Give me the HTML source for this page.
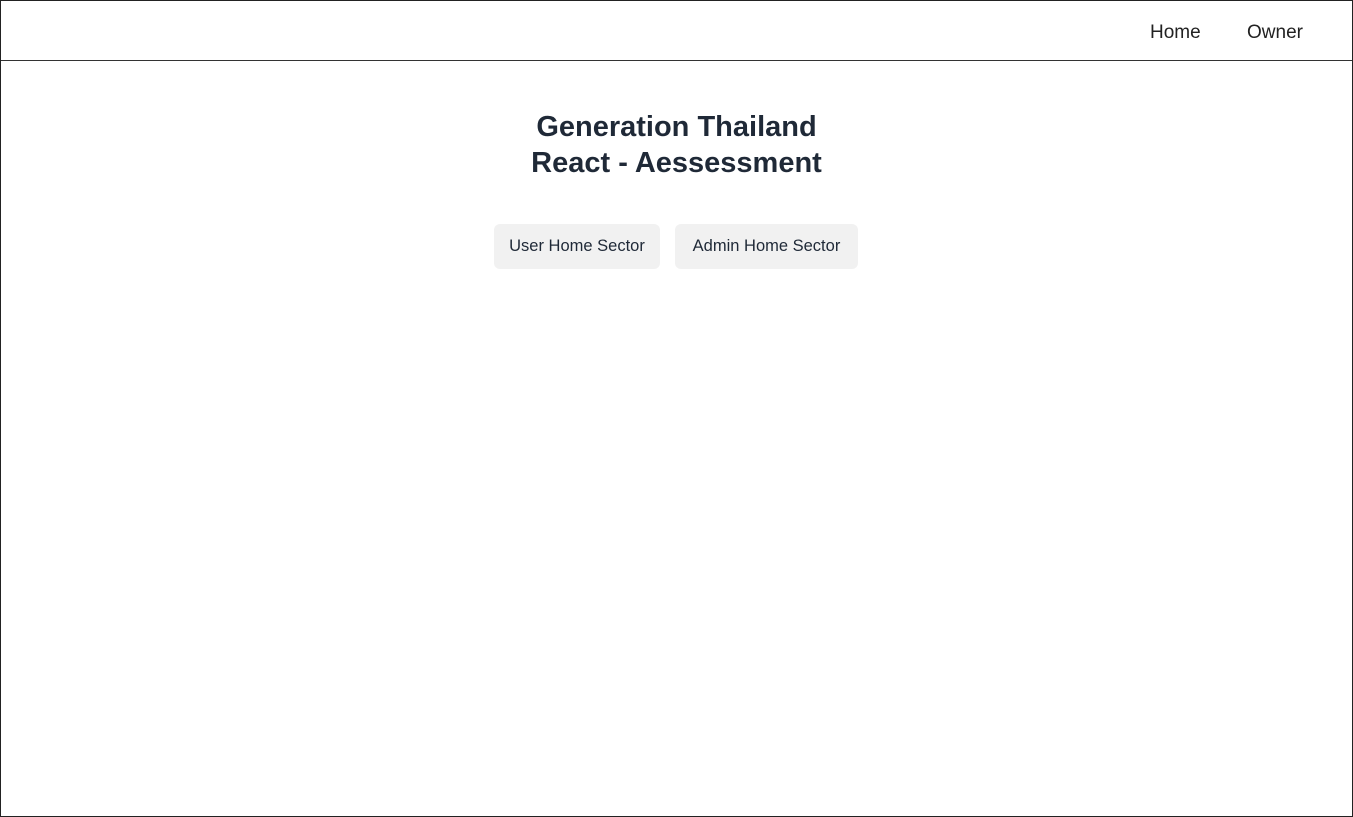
<!DOCTYPE html>
<html><head><style>
html,body{margin:0;padding:0;}
body{width:1353px;height:817px;box-sizing:border-box;border:1px solid #222;font-family:"Liberation Sans",sans-serif;color:#1f2937;background:#fff;position:relative;overflow:hidden;}
.hdr{height:59px;border-bottom:1px solid #333;position:relative;}
.nav{position:absolute;top:21px;font-size:19px;color:#222;}
h1{position:absolute;left:0;right:0;top:108px;margin:0;text-align:center;font-size:29px;line-height:36px;font-weight:bold;color:#1f2937;}
.btn{position:absolute;top:223px;height:45px;background:#f1f1f1;border-radius:6px;font-size:16.5px;line-height:45px;text-align:center;color:#1f2937;}
</style></head><body>
<div class="hdr">
<span class="nav" style="left:1149px">Home</span>
<span class="nav" style="left:1246px">Owner</span>
</div>
<h1>Generation Thailand<br>React - Aessessment</h1>
<div class="btn" style="left:493px;width:166px">User Home Sector</div>
<div class="btn" style="left:674px;width:183px">Admin Home Sector</div>
</body></html>
